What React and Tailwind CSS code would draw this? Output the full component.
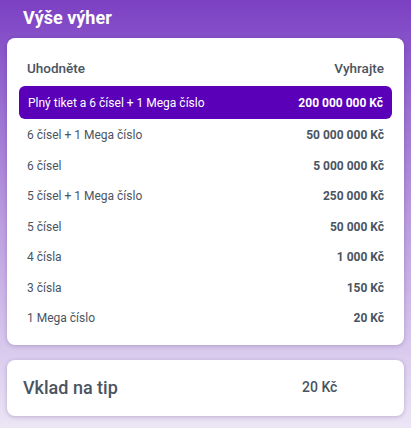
const rows = [
  ['6 čísel + 1 Mega číslo', '50 000 000 Kč'],
  ['6 čísel', '5 000 000 Kč'],
  ['5 čísel + 1 Mega číslo', '250 000 Kč'],
  ['5 čísel', '50 000 Kč'],
  ['4 čísla', '1 000 Kč'],
  ['3 čísla', '150 Kč'],
  ['1 Mega číslo', '20 Kč'],
]

export default function App() {
  return (
    <div
      className="min-h-[428px] w-[411px] bg-gradient-to-b from-[#7c3fc3] via-[#b99ade] to-[#ece6f5] px-[7px] pt-[6px] pb-[13px] text-[#4a5461]"
      style={{ fontFamily: 'Roboto, "Noto Sans", sans-serif' }}
    >
      <h1 className="pl-[16px] text-[18px] font-bold leading-[24px] text-white">Výše výher</h1>

      <div className="mt-[8px] rounded-[8px] bg-white px-[12px] pt-[19px] pb-[11px] shadow-[0_1px_4px_rgba(60,20,110,0.25)]">
        <div className="flex items-center justify-between px-[8px] text-[13.5px] font-medium leading-[22px]">
          <span>Uhodněte</span>
          <span>Vyhrajte</span>
        </div>
        <div className="mt-[7px] flex h-[33px] items-center justify-between rounded-[6px] bg-[#5a00b8] px-[9px] text-[12px] text-white">
          <span>Plný tiket a 6 čísel + 1 Mega číslo</span>
          <span className="font-bold">200 000 000 Kč</span>
        </div>
        <div className="mt-[1px]">
          {rows.map(([label, value]) => (
            <div key={label} className="flex h-[30.5px] items-center justify-between px-[8px] text-[12px]">
              <span>{label}</span>
              <span className="font-bold">{value}</span>
            </div>
          ))}
        </div>
      </div>

      <div className="mt-[15px] flex h-[56px] items-center rounded-[8px] bg-white px-[16px] shadow-[0_1px_4px_rgba(60,20,110,0.25)]">
        <span className="w-[279px] text-[18px] font-medium">Vklad na tip</span>
        <span className="text-[14px] font-medium">20 Kč</span>
      </div>
    </div>
  )
}
